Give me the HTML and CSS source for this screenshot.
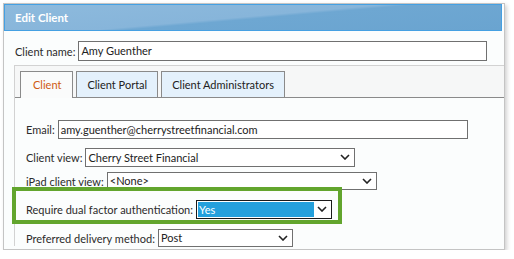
FILE: index.html
```html
<!DOCTYPE html>
<html lang="en">
<head>
    <meta charset="UTF-8">
    <meta name="viewport" content="width=device-width, initial-scale=1.0">
    <title>Edit Client</title>
    <link rel="stylesheet" href="styles.css">
</head>
<body>
    <div class="window">
        <div class="titlebar">Edit Client</div>

        <div class="row name-row">
            <label>Client name:</label>
            <div class="field name-field">Amy Guenther</div>
        </div>

        <div class="panel">
            <div class="tabs">
                <div class="tab active">Client</div>
                <div class="tab">Client Portal</div>
                <div class="tab">Client Administrators</div>
            </div>

            <div class="form">
                <div class="row email-row">
                    <label>Email:</label>
                    <div class="field email-field">amy.guenther@cherrystreetfinancial.com</div>
                </div>
                <div class="row view-row">
                    <label>Client view:</label>
                    <div class="field select view-field">Cherry Street Financial<svg class="chev" viewBox="0 0 10 6"><polyline points="1,1 5,5 9,1"/></svg></div>
                </div>
                <div class="row ipad-row">
                    <label>iPad client view:</label>
                    <div class="field select ipad-field">&lt;None&gt;<svg class="chev" viewBox="0 0 10 6"><polyline points="1,1 5,5 9,1"/></svg></div>
                </div>
                <div class="row dual-row">
                    <label>Require dual factor authentication:</label>
                    <div class="field select dual-field"><span class="picked">Yes</span><svg class="chev" viewBox="0 0 10 6"><polyline points="1,1 5,5 9,1"/></svg></div>
                </div>
                <div class="row delivery-row">
                    <label>Preferred delivery method:</label>
                    <div class="field select delivery-field">Post<svg class="chev" viewBox="0 0 10 6"><polyline points="1,1 5,5 9,1"/></svg></div>
                </div>
            </div>
        </div>

        <!-- highlight around the dual factor setting -->
        <div class="highlight"></div>
    </div>
</body>
</html>
```

FILE: styles.css
```css
body {
    margin: 0;
    background-color: #fff;
    font-family: Lato, "Open Sans", Arial, sans-serif;
    font-size: 11px;
    color: #2b2b2b;
}

.window {
    position: relative;
    margin: 3px 0 0 3px;
    width: 500px;
    height: 245px;
    border: 1px solid #c4c4c4;
    background-color: #fbfdfd;
    box-shadow: 2px 2px 4px rgba(0, 0, 0, 0.18);
}

.titlebar {
    height: 25px;
    margin-right: 2px;
    padding-left: 10px;
    border: 1px solid #45a0e2;
    background: linear-gradient(175deg, #8dbadd 0%, #87b5da 48%, #6ea7d2 52%, #6aa4d0 100%);
    color: #fff;
    font-weight: bold;
    font-size: 11.5px;
    line-height: 25px;
}

.row {
    display: flex;
    align-items: center;
}

.row label {
    margin-right: 3px;
    white-space: nowrap;
}

.field {
    box-sizing: border-box;
    height: 19px;
    padding-left: 2px;
    border: 1px solid #707070;
    background-color: #fff;
    color: #222;
    line-height: 17px;
    white-space: nowrap;
    overflow: hidden;
}

.name-row {
    margin-top: 10px;
    padding-left: 11px;
}

.name-field {
    width: 409px;
    height: 20px;
}

.panel {
    margin: 4px 0 0 10px;
    height: 180px;
    border-top: 1px solid #d2d2d2;
    border-left: 1px solid #d2d2d2;
}

.tabs {
    display: flex;
    gap: 3px;
    padding: 5px 0 0 5px;
    background-color: #f6f7f7;
    border-bottom: 1px solid #8a8a8a;
}

.tab {
    height: 25px;
    padding: 0 10px;
    border: 1px solid #8a8a8a;
    border-bottom: none;
    background-color: #e4f1fc;
    color: #222;
    line-height: 25px;
}

.tab.active {
    margin-bottom: -1px;
    height: 26px;
    padding: 0 11px 0 12px;
    background-color: #fafbfb;
    color: #cf5a12;
}

.form {
    padding-left: 11px;
}

.email-row {
    margin-top: 22px;
}

.email-field {
    width: 410px;
}

.view-row {
    margin-top: 9px;
}

.view-field {
    width: 270px;
}

.ipad-row {
    margin-top: 5px;
}

.ipad-field {
    width: 270px;
    height: 18px;
    line-height: 16px;
}

.dual-row {
    margin-top: 10px;
}

.dual-field {
    width: 136px;
    padding: 1px;
    border-color: #1a1a1a;
}

.dual-field .picked {
    display: inline-block;
    width: 115px;
    height: 15px;
    padding-left: 1px;
    background-color: #24a0dc;
    color: #fff;
    line-height: 15px;
    vertical-align: top;
}

.delivery-row {
    margin-top: 10px;
}

.delivery-field {
    width: 135px;
    height: 18px;
    line-height: 16px;
}

.select {
    position: relative;
}

/* dropdown chevron */
.chev {
    position: absolute;
    right: 4px;
    top: 5px;
    width: 10px;
    height: 6px;
    fill: none;
    stroke: #222;
    stroke-width: 1.6;
}

.highlight {
    position: absolute;
    left: 8px;
    top: 183px;
    width: 322px;
    height: 29px;
    border: 4px solid #62a52d;
}
```
